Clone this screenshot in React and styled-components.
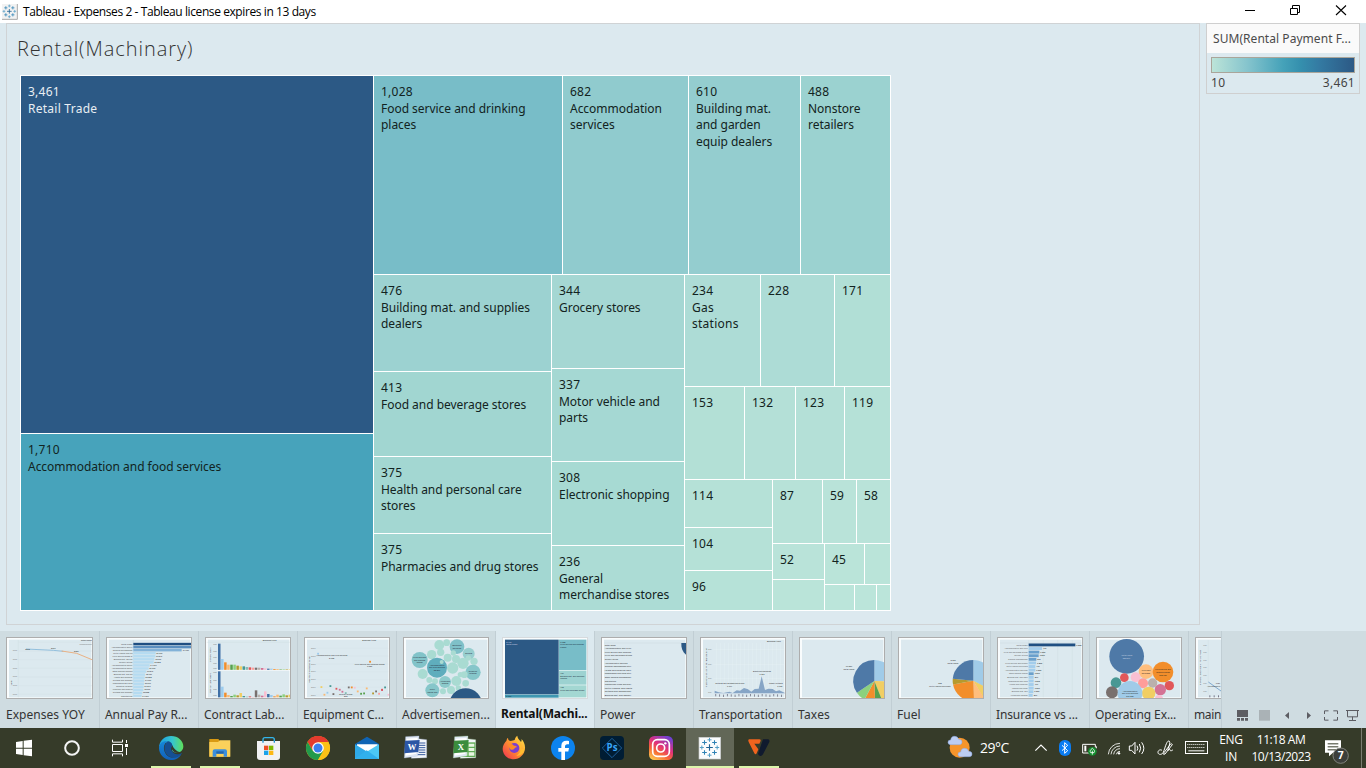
import React from "react";
import styled, { createGlobalStyle } from "styled-components";

const GlobalStyle = createGlobalStyle`
  * { box-sizing: border-box; }
  body { margin: 0; background: #dce9ef; overflow: hidden; }
  svg { display: block; }
`;

const sans = `"Open Sans", "Noto Sans", sans-serif`;
const bookFont = `"Noto Sans", "Open Sans", sans-serif`;

const Screen = styled.div`
  width: 1366px;
  height: 768px;
  display: flex;
  flex-direction: column;
  font-family: ${sans};
  overflow: hidden;
`;

/* ---------- window title bar ---------- */
const TitleBar = styled.header`
  flex: 0 0 23px;
  background: #fff;
  display: flex;
  align-items: center;
  padding-left: 2px;
`;
const WindowTitle = styled.div`
  margin-left: 5px;
  font-size: 12px;
  line-height: 23px;
  letter-spacing: -0.41px;
  color: #000;
  white-space: nowrap;
`;
const WindowButtons = styled.div`
  margin-left: auto;
`;

/* ---------- workspace ---------- */
const Workspace = styled.main`
  flex: 0 0 608px;
  display: flex;
  gap: 6px;
  padding-left: 6px;
  background: #dce9ef;
`;
const ViewPanel = styled.section`
  width: 1194px;
  height: 602px;
  border: 1px solid #d0d3d5;
  padding-left: 10px;
`;
const SheetTitle = styled.h1`
  margin: 0 0 0 0;
  height: 51px;
  line-height: 50px;
  font-family: ${sans};
  font-weight: 300;
  font-size: 20px;
  letter-spacing: 0.94px;
  color: #333;
`;
const Treemap = styled.div`
  margin-left: 3px;
  width: 871px;
  height: 536px;
  padding: 1px;
  background: #fff;
  display: flex;
`;
const Group = styled.div`
  display: flex;
  flex-direction: ${(p) => (p.$dir === "col" ? "column" : "row")};
  gap: 1px;
  flex: ${(p) => (p.$size ? `0 0 ${p.$size}px` : "1 1 0")};
  min-width: 0;
  min-height: 0;
`;
const Tile = styled.div`
  flex: ${(p) => (p.$size ? `0 0 ${p.$size}px` : "1 1 0")};
  min-width: 0;
  min-height: 0;
  overflow: hidden;
  background: ${(p) => p.$color};
  color: ${(p) => (p.$light ? "#e8eef3" : "#122321")};
  padding: 7px 0 0 7px;
  font-family: ${bookFont};
  font-size: 12px;
`;
const TileValue = styled.div`
  line-height: 17px;
  letter-spacing: 0.25px;
`;
const TileLabel = styled.div`
  margin-top: 0.8px;
  line-height: 16.6px;
  letter-spacing: ${(p) => (p.$short ? 0.25 : -0.03)}px;
  white-space: pre;
`;

const Legend = styled.aside`
  width: 154px;
  height: 71px;
  border: 1px solid #cfcfcf;
`;
const LegendTitle = styled.div`
  height: 29px;
  line-height: 29px;
  padding-left: 6px;
  background: #fafafa;
  font-family: ${bookFont};
  font-size: 12px;
  letter-spacing: 0.05px;
  color: #4a4a4a;
  white-space: nowrap;
`;
const Ramp = styled.div`
  margin: 4px 4px 0;
  height: 16px;
  border: 1px solid #aaa59a;
  background: linear-gradient(to right, #bce4d8 0%, #85c4cd 25%, #45a2b9 50%, #3590ae 62%, #347ba3 75%, #2c5985 100%);
`;
const RampRange = styled.div`
  display: flex;
  justify-content: space-between;
  padding: 0 4px;
  line-height: 20px;
  font-family: ${bookFont};
  font-size: 12px;
  letter-spacing: 0.3px;
  color: #444;
`;

/* ---------- sheet tabs ---------- */
const TabBar = styled.nav`
  flex: 0 0 97px;
  display: flex;
  background: #cfdce1;
`;
const TabStrip = styled.div`
  width: 1221px;
  display: flex;
  overflow: hidden;
`;
const Tab = styled.div`
  flex: 0 0 ${(p) => (p.$first ? 100 : 99)}px;
  border-right: 1px solid #c1ced4;
  padding: 6px 0 0 6px;
  background: ${(p) => (p.$active ? "#dce9ef" : "transparent")};
`;
const Thumb = styled.div`
  width: ${(p) => (p.$first ? 87 : 86)}px;
  height: 62px;
  border: 1px solid ${(p) => (p.$active ? "#d6dadd" : "#adadad")};
  background: #dce9ef;
  svg { width: 100%; height: 100%; }
`;
const TabName = styled.div`
  margin-left: ${(p) => (p.$first ? 0 : -1)}px;
  margin-top: ${(p) => (p.$active ? 5 : 6)}px;
  line-height: 20px;
  font-family: ${bookFont};
  font-size: 12px;
  font-weight: ${(p) => (p.$active ? 700 : 400)};
  letter-spacing: ${(p) => p.$track}px;
  color: ${(p) => (p.$active ? "#111" : "#333")};
  white-space: nowrap;
`;
const TabControls = styled.div`
  width: 145px;
  border-left: 1px solid #c1ced4;
`;

/* ---------- taskbar ---------- */
const Taskbar = styled.footer`
  flex: 0 0 40px;
  display: flex;
  background: #363b29;
  color: #fff;
`;
const SystemButtons = styled.div`
  display: flex;
  margin-right: 3px;
`;
const Apps = styled.div`
  display: flex;
  gap: 1px;
`;
const AppCell = styled.div`
  width: 48px;
  height: 40px;
  display: flex;
  flex-direction: column;
  align-items: center;
  background: ${(p) => (p.$active ? "#626757" : "transparent")};
`;
const Underline = styled.div`
  margin-top: -2px;
  width: ${(p) => (p.$wide ? 48 : 40)}px;
  height: 2px;
  background: #dcf5ab;
`;
const Tray = styled.div`
  margin-left: auto;
  display: flex;
`;
const Weather = styled.div`
  width: 83px;
  display: flex;
`;
const Temp = styled.span`
  margin-left: 4px;
  font-size: 14px;
  letter-spacing: -0.5px;
  line-height: 40px;
`;
const TrayText = styled.div`
  width: ${(p) => p.$w}px;
  padding-top: 3px;
  text-align: center;
  font-size: 12px;
  line-height: 17px;
  letter-spacing: ${(p) => p.$track}px;
  white-space: nowrap;
`;
const Peek = styled.div`
  width: 5px;
  border-left: 1px solid #7a7d70;
`;

/* ---------- treemap data ---------- */
const t = (size, color, value, label) => ({ size, color, value, label });
const row = (size, ...items) => ({ dir: "row", size, items });
const col = (size, ...items) => ({ dir: "col", size, items });

const tree = row(
  null,
  col(352, t(357, "#2c5985", "3,461", "Retail Trade"), t(null, "#47a3bb", "1,710", "Accommodation and food services")),
  col(
    null,
    row(
      198,
      t(188, "#78bdc8", "1,028", "Food service and drinking\nplaces"),
      t(125, "#90cbce", "682", "Accommodation\nservices"),
      t(111, "#94cdcf", "610", "Building mat.\nand garden\nequip dealers"),
      t(null, "#9bd2d0", "488", "Nonstore\nretailers")
    ),
    row(
      null,
      col(
        177,
        t(96, "#9cd2d1", "476", "Building mat. and supplies\ndealers"),
        t(84, "#a1d6d1", "413", "Food and beverage stores"),
        t(76, "#a3d7d2", "375", "Health and personal care\nstores"),
        t(null, "#a3d7d2", "375", "Pharmacies and drug stores")
      ),
      col(
        132,
        t(93, "#a5d7d3", "344", "Grocery stores"),
        t(92, "#a5d8d3", "337", "Motor vehicle and\nparts"),
        t(83, "#a7dad3", "308", "Electronic shopping"),
        t(null, "#acdcd5", "236", "General\nmerchandise stores")
      ),
      col(
        null,
        row(
          111,
          t(75, "#addcd6", "234", "Gas\nstations"),
          t(73, "#addcd6", "228"),
          t(null, "#b1dfd6", "171")
        ),
        row(
          92,
          t(59, "#b3e0d6", "153"),
          t(50, "#b4e0d7", "132"),
          t(48, "#b4e0d7", "123"),
          t(null, "#b5e1d7", "119")
        ),
        row(
          null,
          col(87, t(47, "#b5e1d7", "114"), t(42, "#b5e1d7", "104"), t(null, "#b6e2d8", "96")),
          col(
            null,
            row(63, t(49, "#b7e2d8", "87"), t(33, "#b9e3d9", "59"), t(null, "#b9e3d9", "58")),
            row(
              null,
              col(51, t(35, "#b9e3d9", "52"), t(null, "#bae4d9")),
              col(
                null,
                row(40, t(39, "#bae4d9", "45"), t(null, "#bae4d9")),
                row(null, t(29, "#bbe5da"), t(21, "#bbe5da"), t(null, "#bbe5da"))
              )
            )
          )
        )
      )
    )
  )
);

function Node({ node }) {
  if (node.items) {
    return (
      <Group $dir={node.dir} $size={node.size}>
        {node.items.map((n, i) => (
          <Node key={i} node={n} />
        ))}
      </Group>
    );
  }
  return (
    <Tile $size={node.size} $color={node.color} $light={node.value === "3,461"}>
      {node.value && <TileValue>{node.value}</TileValue>}
      {node.label && <TileLabel $short={["Retail Trade", "Gas\nstations"].includes(node.label)}>{node.label}</TileLabel>}
    </Tile>
  );
}

/* ---------- thumbnails ---------- */
const Mini = ({ x, w = 252, children }) => (
  <svg viewBox={`${x} 40 ${w} 180`} preserveAspectRatio="none" fontFamily="Liberation Sans, sans-serif" fontSize="6.2" fill="#222">
    <rect x={x} y="40" width={w} height="180" fill="#f9fcfd" />
    <rect x={x + 6} y="45" width={w - 8} height="173" fill="#dce9ef" />
    {children}
  </svg>
);
const C = ({ d, fill }) => d.map(([x, y, r, f], i) => <circle key={i} cx={x} cy={y} r={r} fill={f || fill} />);
const Bars = ({ d, base, w }) => d.map(([x, y, f], i) => <rect key={i} x={x} y={y} width={w} height={base - y} fill={f} />);
const T = ({ x, y, c, end, mid, len, children }) => (
  <text x={x} y={y} fill={c} textLength={len} lengthAdjust={len ? "spacingAndGlyphs" : undefined} textAnchor={end ? "end" : mid ? "middle" : "start"}>{children}</text>
);

const ExpensesThumb = () => (
  <Mini x={21} w={255}>
    <path d="M55 53H276M55 79H276M55 105H276M55 131H276M55 157H276M55 183H276M55 209H276" stroke="#d0dde3" fill="none" />
    <path d="M55 46V218" stroke="#cbd8de" />
    <path d="M78 73L160 77L190 80" stroke="#86b8da" strokeWidth="2.6" fill="none" />
    <path d="M185 79L230 86L276 105" stroke="#eba873" strokeWidth="2.6" fill="none" />
    <T x="76" y="75">2018</T><T x="153" y="73">2019</T><T x="222" y="83">2020</T>
    <T x="276" y="50" end>Retail/Trade</T><T x="276" y="60" end c="#777">Measurement</T>
    {[80, 106, 132, 158, 185, 212].map((y) => <T key={y} x="38" y={y} c="#777">6000</T>)}
    <text transform="translate(36 182) rotate(-90)">Value</text>
  </Mini>
);

const payNames = ["Retail Trade", "Accommodation and food", "General merchandise", "Motor vehicle and parts", "Food and beverage stores", "Building mat. and supplies", "Grocery stores", "Accommodation services", "Accommodation services", "Other general merchandise", "Building mat. and garden", "Health and personal care", "Clothing and accessories", "Pharmacies and drug store", "Nonstore retailers", "Furniture and home goods", "Clothing and accessories", "Gas stations"];
const payEnd = [573, 573, 545, 467, 466, 463, 461, 449, 446, 439, 435, 434, 433, 432, 431, 430, 427, 425];
const AnnualThumb = () => (
  <Mini x={321}>
    <path d="M400 46V218" stroke="#b9c8cf" />
    {payEnd.map((e, i) => (
      <g key={i}>
        <rect x="400" y={54.5 + i * 9.15} width={e - 400} height="7.4" fill={i === 0 ? "#1f4f82" : i === 1 ? "#5a8fc0" : i === 2 ? "#82b2d8" : "#b5dbf1"} />
        <T x="397" y={60 + i * 9.15} end c="#444">{payNames[i].slice(0, 20)}</T>
        {i > 1 && <T x={i === 2 ? 548 : e + 2} y={60 + i * 9.15} c="#111">{["42,779", "15,582", "14,976", "11,006", "10,249"][i % 5]}</T>}
      </g>
    ))}
  </Mini>
);

const pal = ["#3f6fa5", "#9ccbed", "#f28e2b", "#fbb972", "#58a14e", "#8cd17d", "#b6992d", "#f1ce63", "#499894", "#86bcb6", "#e15759", "#ff9d9a", "#79706e", "#bab0ac", "#d37295", "#fabfd2"];
const ContractThumb = () => (
  <Mini x={618}>
    <path d="M650 136H872" stroke="#fff" strokeWidth="3" />
    <T x="788" y="50">Business types</T>
    <path d="M620 53H870" stroke="#cbd8de" />
    <Bars base={135.5} w={7.5} d={[57, 103, 113, 120, 120, 120, 123, 125, 125, 127, 128, 129, 129, 129, 130, 131, 132, 132, 133, 133, 134, 134, 134, 134].map((y, i) => [654 + i * 9.2, y, pal[i % 16]])} />
    <Bars base={218} w={7.5} d={[140, 186, 204, 211, 214, 210, 212, 205, 214, 216, 215, 217, 197, 210, 213, 200, 208, 211, 215, 210, 213, 209, 212, 210].map((y, i) => [654 + i * 9.2, y, pal[i % 16]])} />
    {[62, 82, 101, 119, 133, 145, 169, 195, 214].map((y) => <T key={y} x="640" y={y} c="#666">60K</T>)}
    <text transform="translate(632 112) rotate(-90)">Employer Costs</text>
    <text transform="translate(632 204) rotate(-90)">Contract Labor Costs</text>
  </Mini>
);

const EquipmentThumb = () => (
  <Mini x={30}>
    <path d="M64 71H280M64 94H280M64 118H280M64 141H280M64 165H280M64 188H280M64 211H280" stroke="#d3e0e6" />
    <T x="202" y="50">Business types</T>
    <T x="110" y="95" mid>Accommodation and food services</T><T x="110" y="103" mid>2,683</T>
    <T x="224" y="120" mid>Food service and drinking places</T><T x="224" y="128" mid>1,527</T>
    <T x="152" y="210" mid>Grocery stores</T><T x="152" y="217" mid>202</T>
    {[73, 97, 120, 143, 167, 189, 213].map((y) => <T key={y} x="48" y={y} c="#777">3000</T>)}
    <text transform="translate(45 174) rotate(-90)">Equipment (Expense) Rental</text>
    <g>
      {[[69, 87, 1], [225, 111, 2], [79, 187, 7], [106, 184, 8], [88, 210, 3], [97, 204, 1], [115, 208, 12], [124, 192, 10], [134, 195, 14], [142, 201, 14], [152, 205, 9], [161, 188, 12], [170, 188, 2], [179, 189, 15], [188, 200, 3], [198, 207, 4], [207, 206, 4], [215, 191, 3], [234, 206, 6], [243, 200, 12], [252, 207, 11], [261, 196, 14], [270, 188, 8], [261, 195, 10], [280, 210, 15]].map(([x, y, c], i) => (
        <rect key={i} x={x - 2.5} y={y - 2.5} width="5.5" height="5.5" fill={pal[c]} />
      ))}
    </g>
  </Mini>
);

const AdThumb = () => (
  <Mini x={327}>
    <C fill="#a9dbd2" d={[[433, 61, 15], [455, 54, 10], [437, 83, 11], [410, 90, 14], [458, 99, 12], [483, 103, 12], [486, 66, 22, "#7fc0c8"], [475, 85, 8], [521, 87, 18, "#97cecf"], [374, 106, 24, "#82c3c9"], [426, 129, 30, "#5fadbd"], [473, 130, 17], [504, 116, 17], [534, 143, 23, "#86c6ca"], [537, 110, 11], [520, 100, 8], [383, 148, 15], [403, 166, 9], [420, 170, 9], [484, 169, 15], [508, 150, 10], [450, 172, 18, "#8ccacb"], [412, 197, 21, "#86c6ca"], [468, 196, 12], [444, 200, 9], [496, 150, 8], [512, 176, 10], [490, 190, 8], [440, 112, 6]]} />
    <circle cx="512" cy="241" r="50" fill="#2c5985" />
    <g fill="#223">
      <T x="486" y="64" mid>Electronic</T><T x="486" y="72" mid>shopping</T>
      <T x="374" y="101" mid>Food services</T><T x="374" y="108" mid>and drinking</T><T x="374" y="116" mid>places</T>
      <T x="426" y="123" mid>Accommodation</T><T x="426" y="131" mid>and food services</T><T x="426" y="138" mid>33,300</T>
      <T x="521" y="89" mid>General</T><T x="534" y="141" mid>Nonstore</T><T x="534" y="148" mid>retailers</T>
      <T x="450" y="171" mid>Automobile</T><T x="450" y="178" mid>dealers</T><T x="412" y="196" mid>Motor</T><T x="412" y="204" mid>vehicle and</T>
    </g>
  </Mini>
);

const RentalThumb = () => (
  <Mini x={625}>
    <rect x="630" y="44" width="246" height="174" fill="#eef8f8" />
    <rect x="631" y="45" width="161" height="164" fill="#2c5985" />
    <rect x="631" y="210" width="161" height="9" fill="#3f97b1" />
    <rect x="793" y="45" width="82" height="91" fill="#78bdc8" />
    <rect x="793" y="138" width="82" height="42" fill="#9cd2d1" />
    <rect x="793" y="182" width="82" height="36" fill="#a3d7d2" />
    <T x="635" y="54" c="#dde">3,461</T><T x="635" y="62" c="#dde">Retail Trade</T>
    <T x="635" y="218" c="#123">1,710</T>
    <g fill="#123"><T x="797" y="54">1,028</T><T x="797" y="62">Food service and drinking</T><T x="797" y="70">places</T>
      <T x="797" y="147">476</T><T x="797" y="156">Building mat. and supplies</T><T x="797" y="164">dealers</T>
      <T x="797" y="191">413</T><T x="797" y="200">Food and beverage stores</T></g>
  </Mini>
);

const powerNames = ["Retail Trade", "Accommodation and food..", "Food service and drinking..", "Food and beverage stores", "Grocery stores", "Accommodation services", "General merchandise stor..", "Health and personal care..", "Pharmacies and drug stor..", "Other general merchandis..", "Gas stations", "Warehouse clubs and sup..", "Motor vehicle and parts", "Clothing and accessories..", "Building mat. and garden.."];
const PowerThumb = () => (
  <Mini x={36}>
    <path d="M42 55H288" stroke="#ccd9df" />
    {powerNames.map((n, i) => <T key={n} x="44" y={63 + i * 10.8} c="#222" len={n.length > 22 ? 82 : undefined}>{n}</T>)}
    <path d="M274 55h14v35c-10-8-15-20-14-35z" fill="#2c5985" />
  </Mini>
);

const TransportThumb = () => (
  <Mini x={333}>
    <path d="M370 75H586M370 119H586M370 162H586M380 55V205M392 55V205M404 55V205M416 55V205M428 55V205M440 55V205M452 55V205M464 55V205M476 55V205M488 55V205M500 55V205M512 55V205M524 55V205M536 55V205M548 55V205M560 55V205M572 55V205" stroke="#e9f2f5" />
    <path d="M374 206V198L386 203L400 205L418 201L428 205L440 197L450 198L462 190L474 194L484 201L494 193L506 192L515 155L525 196L535 192L548 193L558 200L568 197L585 205V206Z" fill="#86a5c6" />
    <T x="531" y="51">Business types</T>
    <T x="516" y="142" mid>Electronic shopping</T><T x="516" y="151" mid>9,781</T>
    <T x="419" y="177" mid>Clothing and accessories stores</T><T x="419" y="186" mid>1,704</T>
    <T x="537" y="179">Family clothing</T><T x="562" y="187">1,020</T>
    {[77, 121, 164, 205].map((y) => <T key={y} x="354" y={y} c="#777">10K</T>)}
    <text transform="translate(350 188) rotate(-90)" textLength="117">Transportation, Shipping, Warehousing</text>
    {Array.from({ length: 18 }, (_, i) => <rect key={i} x={376 + i * 11.6} y={208 + (i % 3)} width="2.5" height="7" fill="#778" />)}
  </Mini>
);

/* A pie wedge between two angles, in degrees clockwise from twelve o'clock. */
const wedge = (cx, cy, r, a, b) => {
  const p = (deg) => {
    const q = ((deg - 90) * Math.PI) / 180;
    return `${cx + r * Math.cos(q)} ${cy + r * Math.sin(q)}`;
  };
  return `M${cx} ${cy}L${p(a)}A${r} ${r} 0 ${b - a > 180 ? 1 : 0} 1 ${p(b)}Z`;
};
const Pie = ({ cx, cy, r, slices }) => slices.map(([a, b, f], i) => <path key={i} d={wedge(cx, cy, r, a, b)} fill={f} />);

const TaxesThumb = () => (
  <Mini x={630}>
    <Pie cx={853} cy={169} r={63} slices={[[0, 92, "#a0cbe8"], [92, 158, "#f1ce63"], [158, 178, "#58a14e"], [178, 208, "#f28e2b"], [208, 236, "#8cd17d"], [236, 360, "#4e79a7"]]} />
    <T x="777" y="127" mid>17,880</T><T x="777" y="136" mid>Retail Trade</T>
  </Mini>
);
const FuelThumb = () => (
  <Mini x={42}>
    <Pie cx={265} cy={168} r={62} slices={[[0, 120, "#a0cbe8"], [118, 150, "#f1ce63"], [148, 178, "#ffbe7d"], [178, 259, "#f28e2b"], [259, 275, "#b6992d"], [275, 360, "#4e79a7"]]} />
    <T x="204" y="110" mid>3,185</T><T x="204" y="119" mid>Retail Trade</T>
    <T x="165" y="179" mid>853</T><T x="165" y="187" mid>Motor vehicle and parts</T>
  </Mini>
);

const insEnd = [571, 471, 463, 461, 454, 453, 451, 451, 446, 446, 446, 446, 446, 445, 443];
const insNames = ["Retail Trade", "Accommodation and food", "Food and beverage stores", "Grocery stores", "General merchandise", "Food service and drinking", "Motor vehicle and parts", "Accommodation services", "Other general merch", "Building mat. and gard", "Pharmacies and drug", "Health and personal", "Warehouse clubs", "Building mat. and", "Automobile dealers"];
const InsuranceThumb = () => (
  <Mini x={339}>
    <path d="M431 46V218M475 46V218M518 46V218M562 46V218M345 55H590" stroke="#cbd8de" />
    {insEnd.map((e, i) => (
      <g key={i}>
        <rect x="431" y={56.5 + i * 10.8} width={e - 431} height="8.5" fill={i === 0 ? "#1f4f82" : [2, 3, 4, 8].includes(i) ? "#6aa0cc" : "#a3cdec"} />
        <T x="428" y={63 + i * 10.8} end c="#555">{insNames[i].slice(0, 24)}</T>
        <T x={e + 3} y={63 + i * 10.8} c="#111">{["1,252", "497", "1,381", "1,257", "209"][i % 5]}</T>
      </g>
    ))}
  </Mini>
);

const OperatingThumb = () => (
  <Mini x={636}>
    <C d={[[725, 95, 52, "#4e79a7"], [783, 141, 22, "#ffbe7d"], [834, 142, 31, "#f28e2b"], [718, 159, 13, "#e15759"], [752, 158, 15, "#fabfd2"], [693, 174, 16, "#499894"], [774, 176, 15, "#ff9d9a"], [803, 175, 14, "#bab0ac"], [853, 183, 14, "#e15759"], [826, 195, 17, "#d37295"], [791, 206, 20, "#f1ce63"], [681, 203, 18, "#79706e"], [735, 206, 37, "#a0cbe8"], [822, 223, 12, "#fabfd2"]]} />
    <g fill="#222">
      <T x="726" y="94" mid c="#c9d6e4">Retail Trade</T><T x="724" y="102" mid c="#c9d6e4">823,207</T>
      <T x="783" y="138" mid>Food and</T><T x="783" y="148" mid>beverage</T>
      <T x="834" y="136" mid>Food service and</T><T x="834" y="145" mid>drinking places</T><T x="834" y="154" mid>362,750</T>
      <T x="735" y="201" mid>Accommodation</T><T x="735" y="209" mid>and food services</T><T x="735" y="218" mid>561,220</T>
    </g>
  </Mini>
);
const MainThumb = () => (
  <Mini x={228}>
    <path d="M265 46V210" stroke="#cfdce2" />
    <path d="M265 172L303 199" stroke="#6c9cc9" strokeWidth="2.500" />
    {[63, 85, 109, 131, 154, 178, 202].map((y) => <T key={y} x="250" y={y} c="#777">600</T>)}
    <T x="287" y="177" len={13}>1,037</T><T x="261" y="186" len={40}>Accommodation</T>
    <text transform="translate(244 182) rotate(-90)" textLength="106">Employer Costs Contribution Plans</text>
    {[268, 281, 294].map((x) => <rect key={x} x={x} y="212" width="3" height="6" fill="#778" />)}
  </Mini>
);

/* name, thumbnail, letter spacing */
const sheets = [
  ["Expenses YOY", ExpensesThumb, 0.03],
  ["Annual Pay R...", AnnualThumb, -0.06],
  ["Contract Lab...", ContractThumb, -0.06],
  ["Equipment C...", EquipmentThumb, -0.08],
  ["Advertisemen...", AdThumb, 0],
  ["Rental(Machi...", RentalThumb, -0.17],
  ["Power", PowerThumb, 0],
  ["Transportation", TransportThumb, 0],
  ["Taxes", TaxesThumb, 0.2],
  ["Fuel", FuelThumb, 0],
  ["Insurance vs ...", InsuranceThumb, -0.12],
  ["Operating Ex...", OperatingThumb, -0.12],
  ["main", MainThumb, -0.35],
];

/* ---------- icons ---------- */
const Cross = ({ x, y, s, w, c }) => <path d={`M${x - s} ${y}h${2 * s}M${x} ${y - s}v${2 * s}`} stroke={c} strokeWidth={w} />;
const TableauMark = ({ cx, cy, k = 1 }) => (
  <g transform={`translate(${cx} ${cy}) scale(${k})`}>
    <Cross x={0} y={0} s={10} w={3.4} c="#1f6292" />
    {[[-15, -15], [15, -15], [-15, 15], [15, 15]].map(([x, y]) => <Cross key={`${x}${y}`} x={x} y={y} s={7} w={3.2} c="#2f82b5" />)}
    {[[0, -23], [0, 23], [-23, 0], [23, 0]].map(([x, y]) => <Cross key={`${x}${y}`} x={x} y={y} s={6} w={3} c="#549ec6" />)}
  </g>
);

const Icon = ({ x, w = 48, children }) => (
  <svg width={w} height="40" viewBox={`${x} 309 ${w * 3} 120`} fill="none">{children}</svg>
);

const StartIcon = () => (
  <Icon x={0}><path fill="#fff" d="M48 351l20-3v20H48zM71 347.500l25-3.500v24H71zM48 371h20v19l-20-3zM71 371h25v23l-25-3.500z" /></Icon>
);
const CortanaIcon = () => <Icon x={144}><circle cx="216" cy="369" r="20.500" stroke="#f4f4f4" strokeWidth="6" /></Icon>;
const TaskViewIcon = () => (
  <Icon x={288}>
    <path d="M337.500 344v7.500h30V344M337.500 394v-7.500h30v7.500M337.500 358.500h30v21h-30zM379.500 345v9M379.500 369v21" stroke="#fff" strokeWidth="3" />
    <rect x="375" y="357" width="9" height="9" fill="#fff" />
  </Icon>
);
const EdgeIcon = () => (
  <Icon x={441}>
    <defs>
      <linearGradient id="edgeTop" x1="0" x2="1"><stop offset="0" stopColor="#1b9de0" /><stop offset=".55" stopColor="#36c5cf" /><stop offset="1" stopColor="#5fe05a" /></linearGradient>
      <linearGradient id="edgeSide" x1="0" y1="0" x2="0" y2="1"><stop offset="0" stopColor="#1687d8" /><stop offset="1" stopColor="#1160b8" /></linearGradient>
    </defs>
    <path d="M477 369c0-22 17-36 36-36 22 0 37 15 37 31 0 12-9 19-20 19-10 0-16-5-13-10 3-4 3-14-8-18-14-5-29 2-32 14z" fill="url(#edgeTop)" />
    <path d="M477 369c1-15 13-23 26-20-10 6-14 18-9 31 6 15 22 22 38 14 6-3 9-6 12-8-5 12-17 19-31 19-21 0-36-17-36-36z" fill="url(#edgeSide)" />
    <path d="M503 349c7 0 14 5 14 13-4 6-5 12-1 17 6 10 20 11 30 4 0 3-11 17-28 15-24-3-33-34-15-49z" fill="#154f92" />
    <path d="M516 373c-3-4 1-7 1-11 4 6 10 18 28 20-11 5-25 2-29-9z" fill="#363b29" />
  </Icon>
);
const ExplorerIcon = () => (
  <Icon x={588}>
    <path d="M628 342h27l5 6h30v47h-62z" fill="#d99a13" />
    <path d="M628 351h26l6-5h31v49h-63z" fill="#fbd15b" />
    <path d="M638 395v-16q0-6 6-6h31q6 0 6 6v16h-10v-9h-22v9z" fill="#3c8fdc" />
    <path d="M649 379h22v7h-22z" fill="#2465ad" />
  </Icon>
);
const StoreIcon = () => (
  <Icon x={735}>
    <path d="M789 353v-9q0-6 6-6h22q6 0 6 6v9" stroke="#33b5ea" strokeWidth="4" />
    <path d="M771 348h69v48q0 9-9 9h-51q-9 0-9-9z" fill="#f1f1f3" />
    <path d="M789 353v-6M823 353v-6" stroke="#1f8fd0" strokeWidth="4" />
    <path d="M792 362h13v13h-13z" fill="#f04e23" /><path d="M807 362h13v13h-13z" fill="#7fba00" />
    <path d="M792 377h13v13h-13z" fill="#1ba2ea" /><path d="M807 377h13v13h-13z" fill="#fdb813" />
  </Icon>
);
const ChromeIcon = () => (
  <Icon x={-3}>
    <circle cx="69" cy="369" r="36" fill="#fbc116" />
    <path d="M69 369L37.800 351A36 36 0 0 1 100.200 351z" fill="#e33b2e" /><path d="M69 351h31.200a36 36 0 0 0-62.400 0l16 27z" fill="#e33b2e" />
    <path d="M37.800 351a36 36 0 0 0 31.200 54l16-27-32-1z" fill="#229a4c" />
    <path d="M69 351h31.200A36 36 0 0 1 69 405l16-27z" fill="#fbc116" />
    <circle cx="69" cy="369" r="17.500" fill="#fff" /><circle cx="69" cy="369" r="13.500" fill="#3a7ef0" />
  </Icon>
);
const MailIcon = () => (
  <Icon x={144}>
    <path d="M180 357l36-22 36 22v45h-72z" fill="#0f64b4" />
    <path d="M186 358h62v20l-31 14-31-14z" fill="#fff" />
    <path d="M180 358l72 44h-72z" fill="#2fa9e8" /><path d="M252 358v44h-72z" fill="#4cc8f4" />
    <path d="M180 402l35-26 37 26z" fill="#31b0ec" />
  </Icon>
);
const OfficeIcon = ({ x, dark, mid, children, letter }) => (
  <Icon x={x}>
    <path d={`M${x + 58} 339l46 5v54l-46 2z`} fill="#f3f6fa" stroke={mid} />
    {children}
    <path d={`M${x + 41} 335l40-2-4 60-40 6z`} fill="#dfe7f4" stroke={mid} />
    <path d={`M${x + 44} 341l33-3-4 48-32 6z`} fill="#fff" />
    <path d={`M${x + 39} 347l44-2-4 36-42 4z`} fill={dark} />
    <text x={x + 60} y="374" fill="#fff" fontSize="26" fontWeight="700" fontFamily="Liberation Serif, serif" textAnchor="middle">{letter}</text>
  </Icon>
);
const WordIcon = () => (
  <OfficeIcon x={291} dark="#2b56a5" mid="#a9bde0" letter="W">
    <path d="M371 354h20M371 361h20M371 368h20M371 375h20M371 382h20M351 389h40" stroke="#35589c" strokeWidth="3" />
  </OfficeIcon>
);
const ExcelIcon = () => (
  <OfficeIcon x={438} dark="#3b8c3d" mid="#a7d0a5" letter="X">
    <path d="M495 352h46v44h-46z" fill="#5fab55" /><path d="M521 356h17v9h-17zM521 369h17v9h-17zM521 382h17v10h-17zM495 382h22v10h-22z" fill="#e7f5e1" />
  </OfficeIcon>
);
const FirefoxIcon = () => (
  <Icon x={585}>
    <defs>
      <linearGradient id="fox" x1="1" y1="0" x2="0" y2="1"><stop offset="0" stopColor="#fff04a" /><stop offset=".5" stopColor="#ff9030" /><stop offset="1" stopColor="#f02a55" /></linearGradient>
    </defs>
    <path d="M634 348c2-7 3-9 5-9 0 5 3 9 8 9 5-2 9-1 12-3 1-6 4-11 8-13 0 9 9 14 11 19 2-3 2-6 1-9 7 6 12 17 11 28-1 19-16 33-34 33s-33-14-33-32c0-8 5-16 8-20z" fill="url(#fox)" />
    <circle cx="658" cy="369" r="15" fill="#7b3fd0" /><path d="M639 358c7-4 14-1 18 4 6 0 9 2 9 5-4 0-8 2-8 5-7 5-14 1-15-4z" fill="#ff8a28" />
    <path d="M664 351c13 1 19 13 14 22 5 0 9-2 11-5-1 16-12 24-25 24 9-5 14-13 12-22-1-8-7-13-12-19z" fill="#ffbd30" />
  </Icon>
);
const FacebookIcon = () => (
  <Icon x={732}>
    <circle cx="804" cy="369" r="36" fill="#0c83ee" />
    <path d="M799 405v-25h-9v-11h9v-7c0-10 6-15 15-15 4 0 7 .500 8 .700v10h-5c-5 0-7 3-7 7v4h12l-2 11h-10v25z" fill="#fff" />
  </Icon>
);
const PhotoshopIcon = () => (
  <Icon x={-6}>
    <rect x="30" y="333" width="72" height="72" rx="12" fill="#001d34" />
    <path d="M66 340l29 29-29 29-29-29z" stroke="#1e5f9a" strokeWidth="3" />
    <text x="66" y="379" fontSize="29" fontWeight="700" fontFamily="Open Sans, sans-serif" fill="#38a5f8" textAnchor="middle">Ps</text>
  </Icon>
);
const InstagramIcon = () => (
  <Icon x={141}>
    <defs>
      <linearGradient id="ig" x1=".2" y1="1" x2=".8" y2="0"><stop offset="0" stopColor="#fdc650" /><stop offset=".3" stopColor="#f76a35" /><stop offset=".58" stopColor="#e0307c" /><stop offset="1" stopColor="#6a42d8" /></linearGradient>
    </defs>
    <rect x="177" y="333" width="72" height="72" rx="16" fill="url(#ig)" />
    <rect x="188" y="344" width="50" height="50" rx="14" stroke="#fff" strokeWidth="5" />
    <circle cx="212" cy="369" r="12" stroke="#fff" strokeWidth="5" /><circle cx="226" cy="355" r="3.500" fill="#fff" />
  </Icon>
);
const TableauIcon = () => (
  <Icon x={288}><rect x="327" y="337" width="65" height="65" fill="#fbfcfd" stroke="#c9cdd0" strokeWidth="2" /><TableauMark cx={358.5} cy={367.5} /></Icon>
);
const VIcon = () => (
  <Icon x={435}>
    <path d="M478 343h30q6 0 3 7l-3 6h-15l12 17-5 12q-3 6-7 0l-17-34q-3-8 2-8z" fill="#f0641e" />
    <path d="M519 343h16q5 2 3 8l-19 37q-3 6-9 5-8-3-5-10z" fill="#101a2e" />
  </Icon>
);

const apps = [
  [EdgeIcon, 1], [ExplorerIcon, 1], [StoreIcon], [ChromeIcon], [MailIcon], [WordIcon], [ExcelIcon], [FirefoxIcon],
  [FacebookIcon], [PhotoshopIcon], [InstagramIcon], [TableauIcon, 1, 1], [VIcon, 1],
];

const Cloud = ({ x, y }) => (
  <path transform={`translate(${x} ${y})`} d="M8 26q-8 0-8-7 0-7 8-7Q10 0 20 1q9 0 12 9 10 0 10 8t-8 8z" fill="#bccdf3" stroke="#8ba6e2" strokeWidth="1.500" />
);

const App = () => (
  <Screen>
    <GlobalStyle />
    <TitleBar>
      <svg width="16" height="16" viewBox="0 0 48 48">
        <rect x="0" y="0" width="47" height="47" fill="#f2f2f2" /><path d="M46 0v46H0" stroke="#a9a9a9" strokeWidth="3" fill="none" />
        <TableauMark cx={22} cy={22} k={0.7} />
      </svg>
      <WindowTitle>Tableau - Expenses 2 - Tableau license expires in 13 days</WindowTitle>
      <WindowButtons>
        <svg width="136" height="23" viewBox="0 0 136 23" fill="none" stroke="#000">
          <path d="M15 10.500h10M60.500 8.500h7v6h-7zM62.500 8.500v-3h7v7h-2" />
          <path d="M106 5.500l10 9.500M116 5.500l-10 9.500" strokeWidth="1.100" />
        </svg>
      </WindowButtons>
    </TitleBar>
    <Workspace>
      <ViewPanel>
        <SheetTitle>Rental(Machinary)</SheetTitle>
        <Treemap><Node node={tree} /></Treemap>
      </ViewPanel>
      <Legend>
        <LegendTitle>SUM(Rental Payment F...</LegendTitle>
        <Ramp />
        <RampRange><span>10</span><span>3,461</span></RampRange>
      </Legend>
    </Workspace>
    <TabBar>
      <TabStrip>
        {sheets.map(([name, Picture, track], i) => (
          <Tab key={name} $first={i === 0} $active={i === 5}>
            <Thumb $first={i === 0} $active={i === 5}><Picture /></Thumb>
            <TabName $first={i === 0} $active={i === 5} $track={track}>{name}</TabName>
          </Tab>
        ))}
      </TabStrip>
      <TabControls>
        <svg width="144" height="97" viewBox="306 18 432 291" fill="none">
          <path d="M351 255h33v21h-33zM351 279h9v8h-9zM363 279h9v8h-9zM375 279h9v8h-9z" fill="#5d5d63" />
          <rect x="417" y="255" width="33" height="32" fill="#aab2b6" />
          <path d="M507 261v21l-12-10.500zM561 261v21l12-10.500z" fill="#5d5d63" />
          <path d="M613.500 267v-9.500h12M640 257.500h12.500V267M652.500 276v9.500H640M625.500 285.500h-12V276M678 256.500h39M682.500 256v19.500h30V256M697.500 275v11M687 286.500h21" stroke="#5d5d63" strokeWidth="3" />
        </svg>
      </TabControls>
    </TabBar>
    <Taskbar>
      <SystemButtons><StartIcon /><CortanaIcon /><TaskViewIcon /></SystemButtons>
      <Apps>
        {apps.map(([Glyph, open, active], i) => (
          <AppCell key={i} $active={active}>
            <Glyph />
            {open && <Underline $wide={active} />}
          </AppCell>
        ))}
      </Apps>
      <Tray>
        <Weather>
          <Icon x={183} w={30}>
            <circle cx="224" cy="368" r="30" fill="#f6952c" />
            <Cloud x={189} y={333} /><Cloud x={219} y={369} />
          </Icon>
          <Temp>29°C</Temp>
        </Weather>
        <Icon x={432} w={24}><path d="M451 377l17-17 17 17" stroke="#fff" strokeWidth="3.500" /></Icon>
        <Icon x={504} w={24}>
          <rect x="522" y="345" width="36" height="48" rx="17" fill="#0a7cf2" />
          <path d="M531 361l17 16-9 8v-32l9 8-17 16" stroke="#fff" strokeWidth="3" />
        </Icon>
        <Icon x={576} w={25}>
          <path d="M612 384h-19v-26h38v9M634 364v6" stroke="#fff" strokeWidth="3" /><rect x="598" y="362" width="6" height="17" fill="#fff" />
          <circle cx="622" cy="379" r="13" fill="#128a2c" /><path d="M622 370c7 5 8 9 5 13h-10c-3-4-2-8 5-13zM622 377v12" stroke="#fff" strokeWidth="2.500" />
        </Icon>
        <Icon x={651} w={24}>
          <path d="M670 388a35 35 0 0 1 35-33M678 388a27 27 0 0 1 27-25M686 388a19 19 0 0 1 19-17M694 388a11 11 0 0 1 11-9" stroke="#fff" strokeWidth="2.500" /><circle cx="702" cy="385" r="3.500" fill="#fff" />
        </Icon>
        <Icon x={723} w={23}>
          <path d="M733 363h7l10-11v35l-10-11h-7zM756 362q5 8 0 15M763 357q8 13 0 25M770 352q13 18 0 35" stroke="#fff" strokeWidth="3" />
        </Icon>
        <Icon x={792} w={30}>
          <path d="M831 376c-6-4-13 1-12 7 1 7 12 7 16-1 5-12 9-33 16-34 7 0 2 14-3 26M840 387l-4 1 1-5 19-25q5-4 6 1zM848 378c2-5 8-6 8-2 0 3 5 1 8-2" stroke="#fff" strokeWidth="3" />
        </Icon>
        <Icon x={882} w={35}>
          <g transform="translate(705 0)">
            <rect x="196.500" y="349.500" width="66" height="36" stroke="#fff" strokeWidth="3" />
            <path d="M202 358.500h54M202 367.500h54" stroke="#fff" strokeWidth="3" strokeDasharray="3 3" /><path d="M205 377.500h48" stroke="#fff" strokeWidth="3" />
          </g>
        </Icon>
        <TrayText $w={34} $track={-0.3}>ENG<br />IN</TrayText>
        <TrayText $w={66} $track={-0.45}>11:18 AM<br />10/13/2023</TrayText>
        <Icon x={582} w={47}>
          <path d="M615 346h48v37h-24l-12 11v-11h-12z" fill="#fff" /><path d="M623 356.500h32M623 365.500h32M623 374.500h26" stroke="#363b29" strokeWidth="3" />
          <circle cx="662" cy="392" r="23" fill="#3c3f3b" stroke="#8f918b" strokeWidth="2.500" />
          <text x="662" y="403" fontSize="31" fontFamily="Open Sans, sans-serif" fontWeight="700" fill="#fff" textAnchor="middle">7</text>
        </Icon>
        <Peek />
      </Tray>
    </Taskbar>
  </Screen>
);

export default App;
